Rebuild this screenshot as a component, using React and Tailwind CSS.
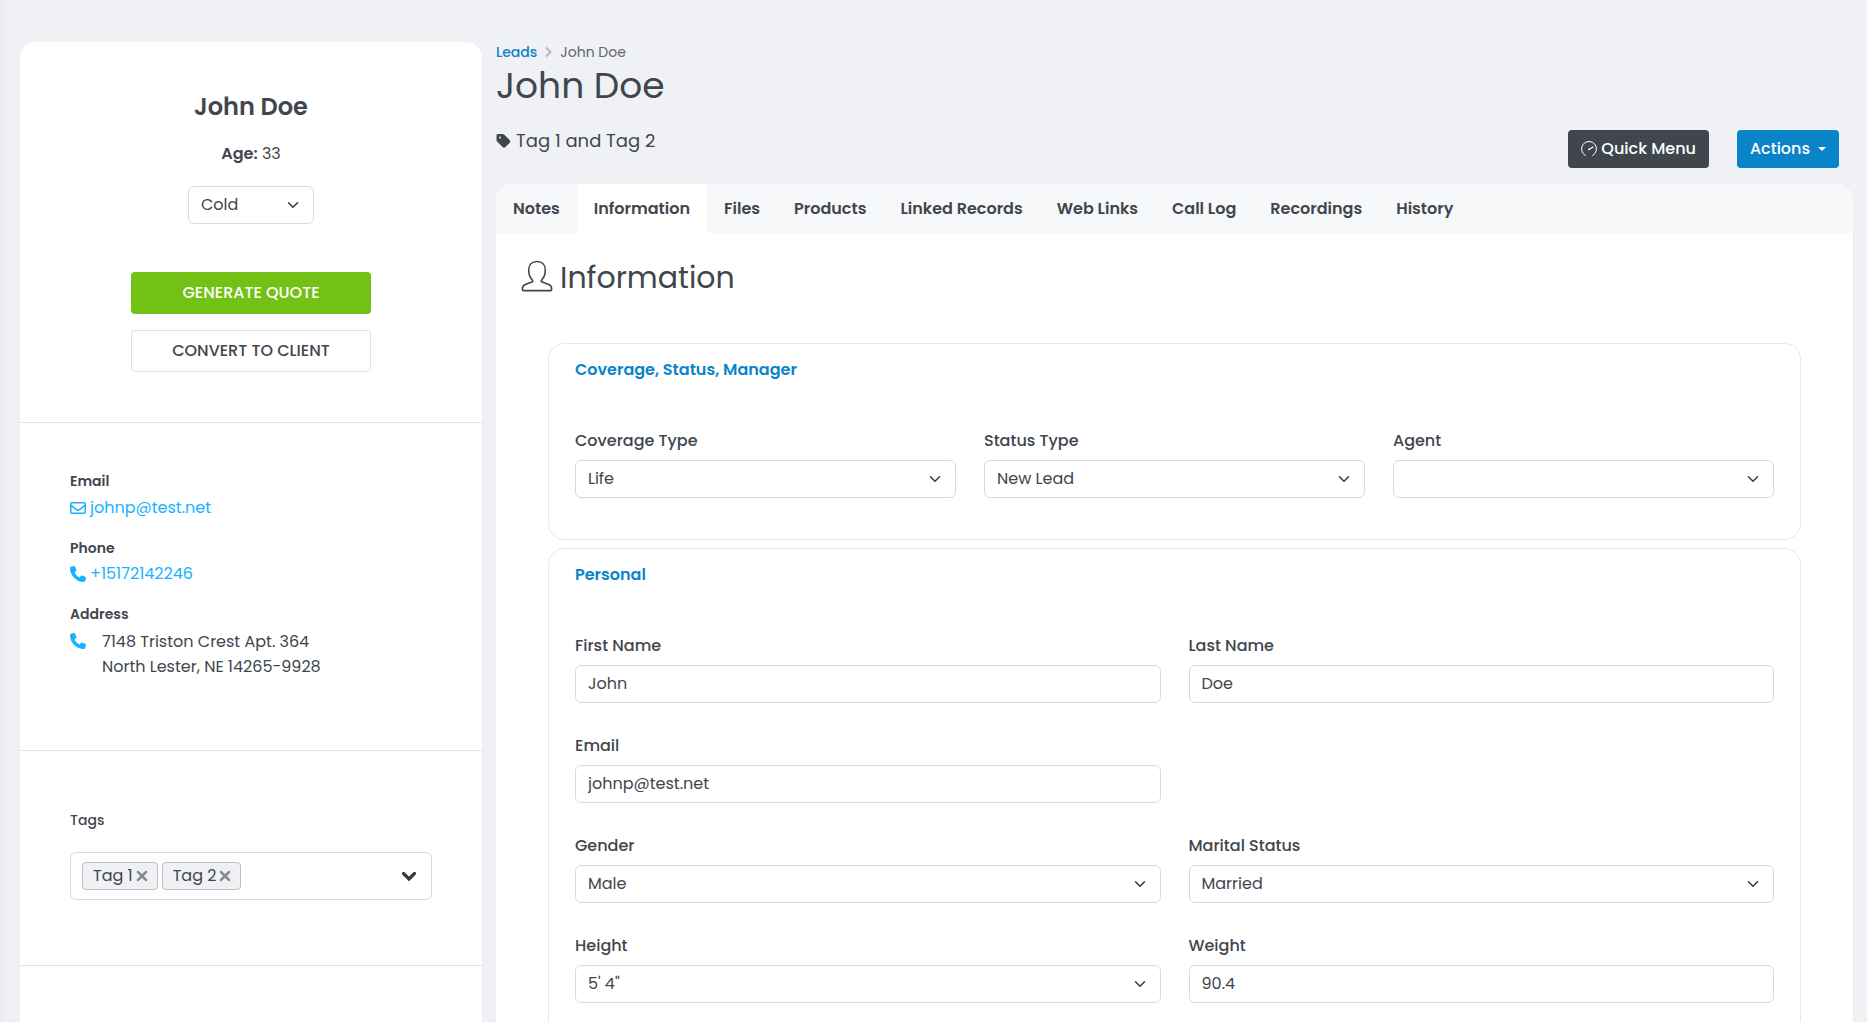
import React from "react";
import { FaPhone, FaRegEnvelope, FaTag, FaXmark } from "react-icons/fa6";

const tabs = [
  "Notes",
  "Information",
  "Files",
  "Products",
  "Linked Records",
  "Web Links",
  "Call Log",
  "Recordings",
  "History",
];

function Chevron({ className }) {
  return (
    <svg className={className} viewBox="0 0 16 16" fill="none" stroke="#343a40" strokeWidth="2" strokeLinecap="round" strokeLinejoin="round" aria-hidden="true">
      <path d="m2 5 6 6 6-6" />
    </svg>
  );
}

function UserIcon() {
  return (
    <svg className="mb-1 h-8 w-8" viewBox="0 0 32 32" fill="none" stroke="#3f464d" strokeWidth="1.6" strokeLinejoin="round" aria-hidden="true">
      <path d="M16 1.5c-5 0-8.300 3.400-8.300 8.600 0 4.600 1.500 7.800 3.500 9.700 1 .9.700 1.900-.4 2.300l-6.500 2.300c-1.900.7-2.900 2.300-2.900 4.300v.8c0 .7.4 1.100 1.100 1.100h27c.7 0 1.100-.4 1.100-1.100v-.8c0-2-1-3.600-2.900-4.300l-6.500-2.300c-1.100-.4-1.400-1.400-.4-2.300 2-1.900 3.500-5.100 3.500-9.700 0-5.200-3.300-8.600-8.300-8.600Z" />
    </svg>
  );
}

function GaugeIcon() {
  return (
    <svg className="h-4 w-4" viewBox="0 0 16 16" fill="none" stroke="currentColor" strokeLinecap="round" aria-hidden="true">
      <path d="M4.300 14.500A7.500 7.500 0 1 1 11.700 14.500" />
      <path d="M8.200 8.200 12 6" strokeWidth="1.200" />
      <circle cx="8" cy="8.300" r=".9" fill="currentColor" stroke="none" />
    </svg>
  );
}

function SelectBox({ id, value, label, className = "" }) {
  return (
    <div className={`relative ${className}`}>
      <select
        id={id}
        aria-label={label}
        defaultValue={value}
        className="h-[38px] w-full appearance-none rounded-md border border-[#d5dae4] bg-white pr-9 pl-3 text-base text-[#3f464d]"
      >
        <option>{value}</option>
      </select>
      <Chevron className="pointer-events-none absolute top-1/2 right-[15px] h-3 w-3 -translate-y-1/2" />
    </div>
  );
}

function Field({ id, label, value, type = "text" }) {
  return (
    <div>
      <label htmlFor={id} className="mb-[7px] block text-base leading-6 font-medium">
        {label}
      </label>
      {type === "select" ? (
        <SelectBox id={id} value={value} />
      ) : (
        <input
          id={id}
          type={type}
          defaultValue={value}
          className="h-[38px] w-full rounded-md border border-[#d5dae4] bg-white px-3 pb-0.5 text-base text-[#3f464d]"
        />
      )}
    </div>
  );
}

function Panel({ title, children }) {
  return (
    <section className="rounded-2xl border border-[#e6e8ec] px-[26px] pt-3.5 pb-[41px]">
      <h3 className="mb-[47px] text-base leading-6 font-semibold text-[#0a84c9]">{title}</h3>
      {children}
    </section>
  );
}

function Sidebar() {
  return (
    <aside className="mt-[42px] w-[462px] shrink-0 rounded-t-2xl bg-white shadow-xs">
      <div className="flex h-[381px] flex-col items-center border-b border-[#dfe2e5] pt-[47px]">
        <h2 className="text-2xl leading-9 font-semibold">John Doe</h2>
        <p className="mt-[17px] leading-6">
          <strong className="font-semibold">Age:</strong> 33
        </p>
        <SelectBox id="temperature" label="Lead temperature" value="Cold" className="mt-5 w-[126px]" />
        <button type="button" className="mt-12 h-[42px] w-60 rounded bg-[#73c114] text-base font-medium text-white">
          GENERATE QUOTE
        </button>
        <button type="button" className="mt-4 h-[42px] w-60 rounded border border-[#dee2e6] bg-white text-base font-medium">
          CONVERT TO CLIENT
        </button>
      </div>

      <div className="h-[328px] border-b border-[#dfe2e5] px-[50px] pt-12">
        <h4 className="text-sm leading-5 font-semibold">Email</h4>
        <a href="mailto:johnp@test.net" className="mt-[5px] flex items-center gap-1 leading-6 text-[#18b3ff]">
          <FaRegEnvelope className="h-4 w-4" />
          johnp@test.net
        </a>
        <h4 className="mt-[18px] text-sm leading-5 font-semibold">Phone</h4>
        <a href="tel:+15172142246" className="mt-1 flex items-center gap-1 leading-6 text-[#18b3ff]">
          <FaPhone className="h-4 w-4" />
          +15172142246
        </a>
        <h4 className="mt-[18px] text-sm leading-5 font-semibold">Address</h4>
        <div className="mt-[5px] flex gap-4">
          <FaPhone className="mt-1 h-4 w-4 text-[#18b3ff]" />
          <address className="leading-[25px] not-italic">
            7148 Triston Crest Apt. 364
            <br />
            North Lester, NE 14265-9928
          </address>
        </div>
      </div>

      <div className="h-[215px] border-b border-[#dfe2e5] px-[50px] pt-[59px]">
        <h4 className="text-sm leading-5 font-medium">Tags</h4>
        <div className="mt-[22px] flex h-12 items-center gap-1 rounded-md border border-[#d5dae4] px-[11px]">
          {["Tag 1", "Tag 2"].map((tag) => (
            <span
              key={tag}
              className="flex h-7 items-center gap-0.5 rounded border border-[#bbbfc3] bg-[#eff1f4] pr-2 pl-2.5"
            >
              {tag}
              <button type="button" aria-label={`Remove ${tag}`} className="text-[#82878c]">
                <FaXmark className="h-4 w-3.5" strokeWidth="24" stroke="currentColor" />
              </button>
            </span>
          ))}
          <button type="button" aria-label="Show tags" className="mr-[3px] ml-auto">
            <svg className="h-4 w-4" viewBox="0 0 16 16" fill="none" stroke="#343a40" strokeWidth="3.200" strokeLinecap="round" aria-hidden="true">
              <path d="m2.500 5.500 5.500 5.500 5.500-5.500" />
            </svg>
          </button>
        </div>
      </div>
    </aside>
  );
}

function Header() {
  return (
    <header className="flex h-[184px] items-end justify-between">
      <div className="h-[142px]">
        <nav aria-label="Breadcrumb" className="flex items-center gap-2 text-sm leading-5">
          <a href="#leads" className="font-medium text-[#0a84c9]">
            Leads
          </a>
          <svg className="h-3 w-[7px]" viewBox="0 0 7 12" fill="none" stroke="#b6bbc0" strokeWidth="2" aria-hidden="true">
            <path d="m1 1.500 4.500 4.500-4.500 4.500" />
          </svg>
          <span className="text-[#60676e]">John Doe</span>
        </nav>
        <h1 className="mt-px text-4xl leading-[46px]">John Doe</h1>
        <p className="mt-[18px] flex items-center gap-[5px] text-lg leading-7">
          <FaTag className="h-4 w-[15px]" />
          Tag 1 and Tag 2
        </p>
      </div>
      <div className="mr-3.5 mb-4 flex gap-7">
        <button type="button" className="flex h-[38px] items-center gap-1 rounded bg-[#3f464d] px-[13px] text-base font-medium text-white">
          <GaugeIcon />
          Quick Menu
        </button>
        <button type="button" className="flex h-[38px] items-center gap-2 rounded bg-[#0a84c9] px-[13px] text-base font-medium text-white">
          Actions
          <svg className="h-1 w-2" viewBox="0 0 8 4" fill="currentColor" aria-hidden="true">
            <path d="M0 0h8L4 4z" />
          </svg>
        </button>
      </div>
    </header>
  );
}

function App() {
  return (
    <div className="flex h-screen gap-3.5 overflow-hidden bg-[#f0f1f5] pr-3.5 pl-5 font-['Poppins','Inter',sans-serif] text-base text-[#3f464d] shadow-[inset_10px_0_8px_-6px_#e9eaee]">
      <Sidebar />
      <main className="min-w-0 flex-1">
        <Header />
        <div className="rounded-t-2xl bg-white shadow-xs">
          <div role="tablist" className="flex overflow-hidden rounded-t-2xl bg-[#f7f8fa]">
            {tabs.map((tab) => (
              <button
                key={tab}
                type="button"
                role="tab"
                aria-selected={tab === "Information"}
                className={`h-[49px] px-[17px] text-base font-semibold whitespace-nowrap ${
                  tab === "Information" ? "bg-white" : ""
                }`}
              >
                {tab}
              </button>
            ))}
          </div>

          <div className="px-[25px] pt-[22px]">
            <h2 className="flex items-center gap-[7px] text-3xl leading-[46px]">
              <UserIcon />
              Information
            </h2>
          </div>

          <div className="flex flex-col gap-2 px-[52px] pt-[42px]">
            <Panel title="Coverage, Status, Manager">
              <div className="grid grid-cols-3 gap-7">
                <Field id="coverage" label="Coverage Type" value="Life" type="select" />
                <Field id="status" label="Status Type" value="New Lead" type="select" />
                <Field id="agent" label="Agent" value="" type="select" />
              </div>
            </Panel>
            <Panel title="Personal">
              <div className="grid grid-cols-2 gap-x-7 gap-y-[31px]">
                <Field id="first-name" label="First Name" value="John" />
                <Field id="last-name" label="Last Name" value="Doe" />
                <Field id="email" label="Email" value="johnp@test.net" type="email" />
                <div />
                <Field id="gender" label="Gender" value="Male" type="select" />
                <Field id="marital" label="Marital Status" value="Married" type="select" />
                <Field id="height" label="Height" value={"5' 4\""} type="select" />
                <Field id="weight" label="Weight" value="90.4" />
              </div>
            </Panel>
          </div>
        </div>
      </main>
    </div>
  );
}

export default App;
